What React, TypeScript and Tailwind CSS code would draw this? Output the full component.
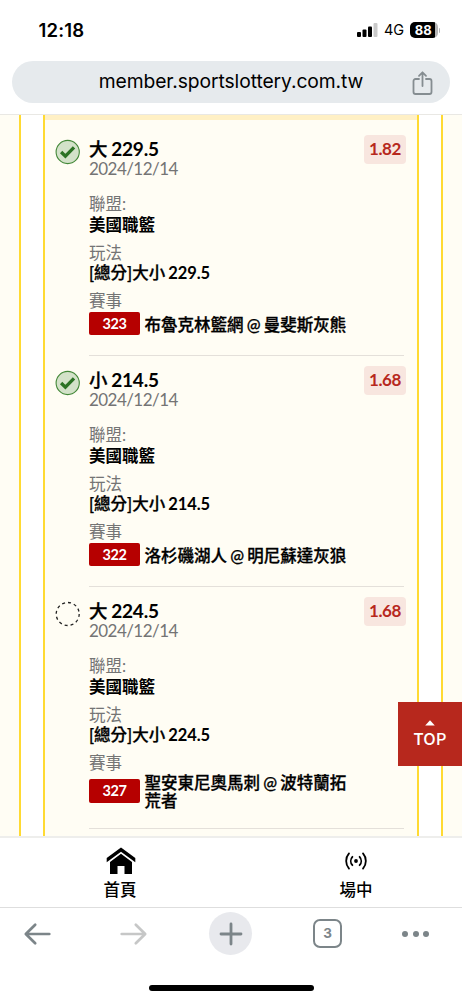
type Bet = {
  side: string;
  total: string;
  odds: string;
  date: string;
  league: string;
  code: string;
  match: string[];
  won: boolean;
};

const bets: Bet[] = [
  {
    side: "大",
    total: "229.5",
    odds: "1.82",
    date: "2024/12/14",
    league: "美國職籃",
    code: "323",
    match: ["布魯克林籃網 @ 曼斐斯灰熊"],
    won: true,
  },
  {
    side: "小",
    total: "214.5",
    odds: "1.68",
    date: "2024/12/14",
    league: "美國職籃",
    code: "322",
    match: ["洛杉磯湖人 @ 明尼蘇達灰狼"],
    won: true,
  },
  {
    side: "大",
    total: "224.5",
    odds: "1.68",
    date: "2024/12/14",
    league: "美國職籃",
    code: "327",
    match: ["聖安東尼奧馬刺 @ 波特蘭拓", "荒者"],
    won: false,
  },
];

function StatusBar() {
  return (
    <div className="flex h-[60px] items-center justify-between pl-[38.5px] pr-[22px]">
      <span className="text-[18.5px] font-semibold leading-none tracking-[0.2px]">12:18</span>

      <div className="flex items-center">
        <svg width="21" height="14" viewBox="0 0 21 14">
          <rect x="0" y="9" width="4" height="5" rx="1" />
          <rect x="5.5" y="6.5" width="4" height="7.5" rx="1" />
          <rect x="11" y="3.5" width="4" height="10.5" rx="1" />
          <rect x="16.5" y="0" width="4" height="14" rx="1" fill="#c9c9c9" />
        </svg>
        <span className="ml-[6px] w-[20px] text-[14.5px] leading-none tracking-[-0.2px]">4G</span>
        <div className="ml-[6px] flex h-[15.5px] w-[27.5px] items-center justify-center rounded-[5px] bg-[linear-gradient(90deg,#000_88%,#b5b5b5_88%)] pr-[1px] text-[13px] font-bold leading-none text-white">
          88
        </div>
        <div className="ml-[1px] h-[5px] w-[1.5px] rounded-r bg-[#b5b5b5]" />
      </div>
    </div>
  );
}

function AddressBar() {
  return (
    <div className="relative mx-3 mt-[0.5px] flex h-[42.5px] items-center justify-center rounded-full bg-[#e6eaed]">
      <span className="text-[19.3px] leading-none tracking-[-0.09px]">member.sportslottery.com.tw</span>
      <svg
        className="absolute right-[17px] top-[9px]"
        width="21"
        height="26"
        viewBox="0 0 21 26"
        fill="none"
        stroke="#858d91"
        strokeWidth="1.8"
        strokeLinecap="round"
        strokeLinejoin="round"
      >
        <path d="M7 9H3.5A2 2 0 0 0 1.5 11v11a2 2 0 0 0 2 2h14a2 2 0 0 0 2-2V11a2 2 0 0 0-2-2H14" />
        <path d="M10.5 16V2.5M7 5.8l3.5-3.5L14 5.8" />
      </svg>
    </div>
  );
}

function ResultIcon({ won }: { won: boolean }) {
  if (!won) {
    return (
      <svg width="26" height="26" viewBox="0 0 26 26" fill="none">
        <circle cx="12.7" cy="13" r="11.5" stroke="#222" strokeWidth="1.3" strokeDasharray="3 3.02" />
      </svg>
    );
  }

  return (
    <svg width="26" height="26" viewBox="0 0 26 26" fill="none">
      <circle cx="12.7" cy="13" r="11.6" fill="#d3e2c9" stroke="#438838" strokeWidth="1.1" />
      <path d="M6.1 13l4.3 4.2 8.6-8.8" stroke="#2c7325" strokeWidth="3.3" />
    </svg>
  );
}

function BetItem({ bet }: { bet: Bet }) {
  return (
    <div className="flex pl-[9.5px] pr-[13px]">
      <div className="w-[34.5px] shrink-0 pt-[14px]">
        <ResultIcon won={bet.won} />
      </div>

      <div className="flex-1 border-b border-[#e4e0da] pb-[19px] pt-3 text-[16.5px] leading-5 [word-spacing:-1px]">
        <div className="flex h-6 justify-between">
          <span className="text-[18.5px] font-medium leading-6 [-webkit-text-stroke:0.3px]">
            {bet.side}{" "}
            <span className="text-[19px] font-bold tracking-[-0.2px] [-webkit-text-stroke:0]">{bet.total}</span>
          </span>
          <span className="-mr-[2px] -mt-[2.5px] flex h-[29.5px] w-[42px] items-center justify-center rounded-[4px] bg-[#f8e6df] text-[17px] font-bold tracking-[-0.4px] text-[#b7281d]">
            {bet.odds}
          </span>
        </div>
        <div className="h-4 text-[17px] leading-4 tracking-[-0.55px] text-[#747474]">{bet.date}</div>

        <div className="mt-[17px] text-[#747474]">聯盟:</div>
        <div className="mt-[1px] font-bold">{bet.league}</div>

        <div className="mt-2 text-[#747474]">玩法</div>
        <div className="font-medium [-webkit-text-stroke:0.3px]">
          [總分]大小{" "}
          <span className="font-bold tracking-[-0.1px] [-webkit-text-stroke:0]">{bet.total}</span>
        </div>

        <div className="mt-2 text-[#747474]">賽事</div>
        <div className="flex min-h-[25px] items-center">
          <span className="flex h-[23.5px] w-[51px] shrink-0 items-center justify-center rounded-[2px] bg-[#b60000] text-[14.5px] font-bold tracking-[-0.4px] text-white">
            {bet.code}
          </span>
          <div className="relative top-[1px] ml-[4.5px] font-medium leading-[18px] [-webkit-text-stroke:0.3px]">
            {bet.match.map((line) => (
              <div key={line} className="whitespace-nowrap">{line}</div>
            ))}
          </div>
        </div>
      </div>
    </div>
  );
}

function BottomNav() {
  return (
    <nav className="flex h-[71px] justify-between border-t-2 border-[#eeeeec] bg-white px-[90px] text-[16.5px] font-medium">
      <div className="flex w-[60px] flex-col items-center pt-[9px]">
        <svg className="ml-[1px]" width="30" height="28" viewBox="0 0 30 28">
          <path d="M15 0.5L29.3 11v4.2L15 4.7 0.7 15.2V11z" />
          <path d="M15 6.7L26 15v12h-7.5v-8h-7v8H4V15z" />
        </svg>
        <span className="mt-[5px] leading-5">首頁</span>
      </div>
      <div className="-mr-[14px] flex w-[60px] flex-col items-center pt-[13px]">
        <svg
          width="24"
          height="20"
          viewBox="0 0 24 20"
          fill="none"
          stroke="#000"
          strokeWidth="1.8"
          strokeLinecap="round"
        >
          <circle cx="12" cy="10" r="1.9" fill="#000" stroke="none" />
          <path d="M8.4 5.8a6.3 6.3 0 0 0 0 8.4M15.6 5.8a6.3 6.3 0 0 1 0 8.4" />
          <path d="M5 2.4a11.6 11.6 0 0 0 0 15.2M19 2.4a11.6 11.6 0 0 1 0 15.2" />
        </svg>
        <span className="mt-[9px] leading-5">場中</span>
      </div>
    </nav>
  );
}

function BrowserToolbar() {
  return (
    <div className="h-[93px] border-t border-[#dedede] bg-white">
      <div className="flex h-[51px] items-center pl-[23px]">
        <svg width="28" height="24" viewBox="0 0 28 24" fill="none" stroke="#7c8589" strokeWidth="2.7" strokeLinecap="round" strokeLinejoin="round">
          <path d="M26.3 12H3M12.2 2.7L2.8 12l9.4 9.3" />
        </svg>
        <svg className="ml-[69px]" width="28" height="24" viewBox="0 0 28 24" fill="none" stroke="#c6c7c7" strokeWidth="2.7" strokeLinecap="round" strokeLinejoin="round">
          <path d="M1.7 12H25M15.8 2.7l9.4 9.3-9.4 9.3" />
        </svg>
        <div className="ml-[61px] flex size-[43px] items-center justify-center rounded-full bg-[#e8e9ed]">
          <svg width="24" height="24" viewBox="0 0 24 24" fill="none" stroke="#7c8589" strokeWidth="2.8" strokeLinecap="round">
            <path d="M12 2v20M2 12h20" />
          </svg>
        </div>
        <div className="ml-[61px] flex size-[29px] items-center justify-center rounded-[7px] border-[2.5px] border-[#7c8589] text-[13.5px] font-bold leading-none text-[#7c8589]">
          3
        </div>
        <div className="ml-[60px] flex gap-[4.5px]">
          <span className="size-[6px] rounded-full bg-[#7c8589]" />
          <span className="size-[6px] rounded-full bg-[#7c8589]" />
          <span className="size-[6px] rounded-full bg-[#7c8589]" />
        </div>
      </div>
      <div className="mx-auto mt-[26px] h-[6px] w-[165px] rounded-full bg-black" />
    </div>
  );
}

export default function App() {
  return (
    <div className="flex h-[1000px] w-[462px] flex-col overflow-hidden bg-white font-['Inter','Noto_Sans_CJK_TC',sans-serif] text-black">
      <header className="h-[115px] shrink-0 border-b border-[#e9e8e4] bg-white">
        <StatusBar />
        <AddressBar />
      </header>

      <main className="relative flex-1 bg-[#fffdf4] pl-[19px] pr-[19px] font-['Lato','Noto_Sans_CJK_TC',sans-serif]">
        <div className="h-full border-x-2 border-[#ffda32] bg-white px-[22px]">
          <div className="h-full border-x-2 border-[#ffda32] bg-[#fffdf4]">
            <div className="h-[5px] bg-[#fff0c5]" />
            <div className="pt-[5px]">
              {bets.map((bet) => (
                <BetItem key={bet.code} bet={bet} />
              ))}
            </div>
          </div>
        </div>

        <button className="absolute right-0 top-[586.5px] flex size-16 flex-col items-center bg-[#b7281d] pt-[18px] text-white">
          <svg width="10" height="6" viewBox="0 0 10 6" fill="#fff">
            <path d="M5 0.3L9.8 5.5H0.2z" />
          </svg>
          <span className="mt-[2px] font-['Noto_Sans_CJK_TC',sans-serif] text-[16.5px] font-medium leading-5">TOP</span>
        </button>
      </main>

      <div className="shrink-0">
        <BottomNav />
        <BrowserToolbar />
      </div>
    </div>
  );
}
